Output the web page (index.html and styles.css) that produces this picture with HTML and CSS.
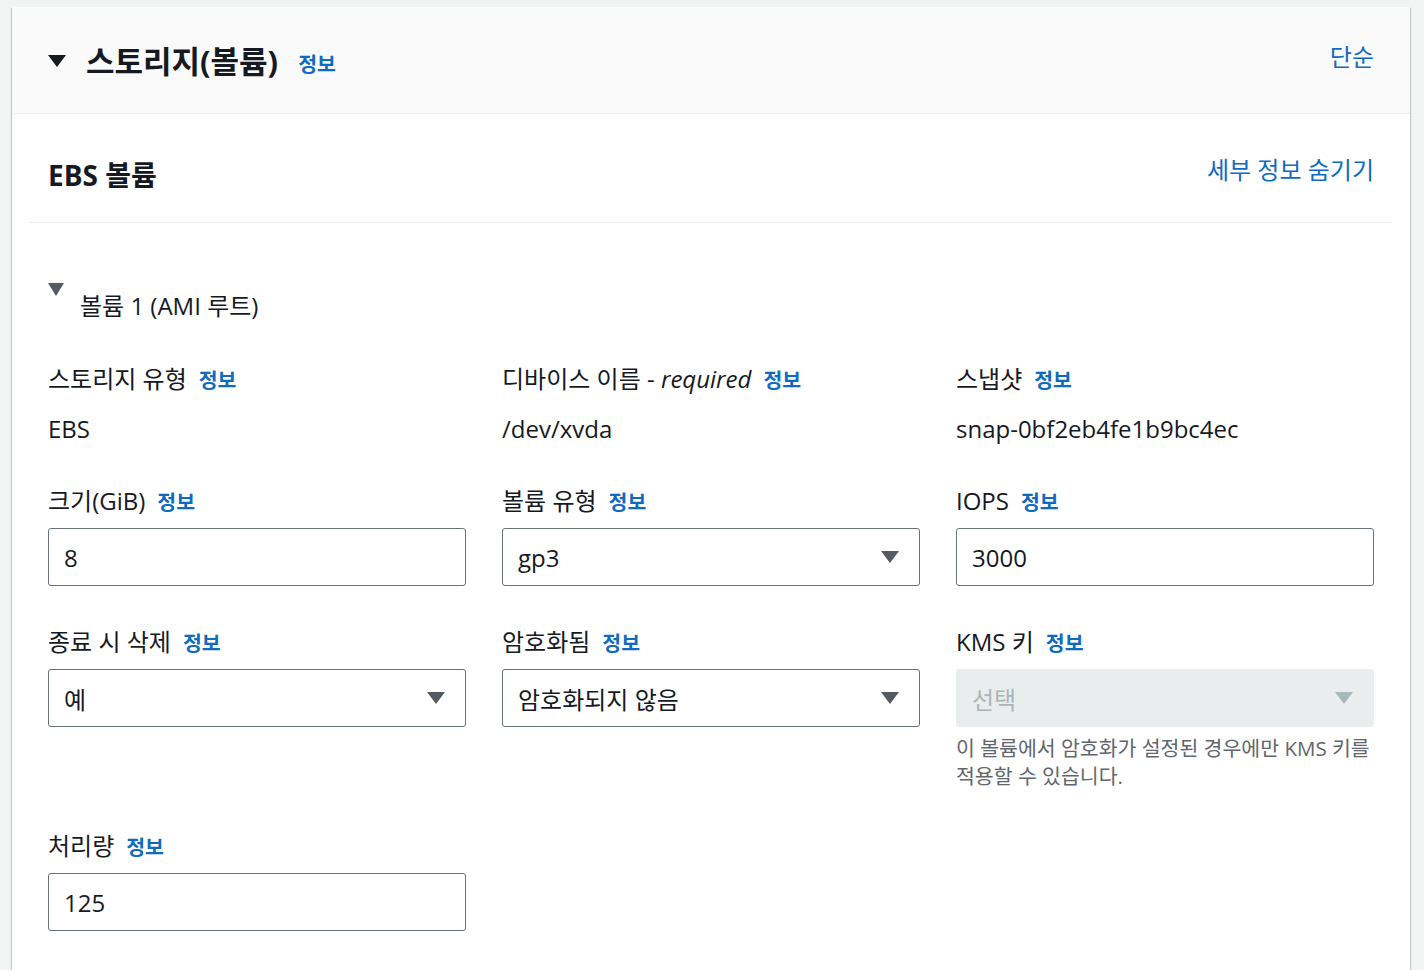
FILE: index.html
```html
<!DOCTYPE html>
<html lang="ko">

<head>
    <meta charset="UTF-8">
    <meta name="viewport" content="width=device-width, initial-scale=1.0">
    <title>스토리지(볼륨)</title>
    <link rel="stylesheet" href="styles.css">
</head>

<body>
    <div class="container">
        <div class="container-header">
            <h2 class="title">
                <span class="caret"></span>
                <span>스토리지(볼륨)</span>
                <a class="info title-info" href="#">정보</a>
            </h2>
            <a class="link" href="#">단순</a>
        </div>

        <div class="container-body">
            <div class="subheader">
                <h3>EBS 볼륨</h3>
                <a class="link" href="#">세부 정보 숨기기</a>
            </div>

            <div class="volume">
                <div class="volume-title">
                    <span class="caret caret-grey"></span>
                    <span>볼륨 1 (AMI 루트)</span>
                </div>

                <div class="fields">
                    <div class="field">
                        <label><span>스토리지 유형</span><a class="info" href="#">정보</a></label>
                        <div class="value">EBS</div>
                    </div>
                    <div class="field">
                        <label><span>디바이스 이름 - <i>required</i></span><a class="info" href="#">정보</a></label>
                        <div class="value">/dev/xvda</div>
                    </div>
                    <div class="field">
                        <label><span>스냅샷</span><a class="info" href="#">정보</a></label>
                        <div class="value">snap-0bf2eb4fe1b9bc4ec</div>
                    </div>

                    <div class="field">
                        <label><span>크기(GiB)</span><a class="info" href="#">정보</a></label>
                        <div class="input">8</div>
                    </div>
                    <div class="field">
                        <label><span>볼륨 유형</span><a class="info" href="#">정보</a></label>
                        <div class="input select">gp3<span class="arrow"></span></div>
                    </div>
                    <div class="field">
                        <label><span>IOPS</span><a class="info" href="#">정보</a></label>
                        <div class="input">3000</div>
                    </div>

                    <div class="field">
                        <label><span>종료 시 삭제</span><a class="info" href="#">정보</a></label>
                        <div class="input select">예<span class="arrow"></span></div>
                    </div>
                    <div class="field">
                        <label><span>암호화됨</span><a class="info" href="#">정보</a></label>
                        <div class="input select">암호화되지 않음<span class="arrow"></span></div>
                    </div>
                    <div class="field">
                        <label><span>KMS 키</span><a class="info" href="#">정보</a></label>
                        <div class="input select disabled">선택<span class="arrow"></span></div>
                        <p class="hint">이 볼륨에서 암호화가 설정된 경우에만 KMS 키를 적용할 수 있습니다.</p>
                    </div>

                    <div class="field">
                        <label><span>처리량</span><a class="info" href="#">정보</a></label>
                        <div class="input">125</div>
                    </div>
                </div>
            </div>
        </div>
    </div>
</body>

</html>
```

FILE: styles.css
```css
* {
    box-sizing: border-box;
}

body {
    margin: 0;
    padding-top: 7px;
    background: #f2f3f3;
    color: #16191f;
    font-family: "Open Sans", "Noto Sans CJK KR", sans-serif;
    font-size: 24px;
}

a {
    text-decoration: none;
}

.container {
    margin-left: 12px;
    width: 1398px;
    min-height: 970px;
    background: #fff;
    box-shadow: 0 1px 1px 0 rgba(0, 28, 36, 0.3), 1px 1px 1px 0 rgba(0, 28, 36, 0.15), -1px 1px 1px 0 rgba(0, 28, 36, 0.15);
}

.container-header {
    height: 107px;
    padding: 34px 36px 0 36px;
    background: #fafafa;
    border-bottom: 1px solid #eaeded;
    display: flex;
    justify-content: space-between;
    align-items: flex-start;
}

.title {
    margin: 0;
    font-size: 31px;
    line-height: 40px;
    font-weight: 700;
    display: flex;
    align-items: center;
}

.caret {
    width: 0;
    height: 0;
    border-left: 9px solid transparent;
    border-right: 9px solid transparent;
    border-top: 12px solid #16191f;
    margin-right: 20px;
}

.caret-grey {
    border-left-width: 8.5px;
    border-right-width: 8.5px;
    border-top: 13px solid #545b64;
    margin-right: 16px;
}

.link {
    color: #0f6bbf;
    font-size: 24px;
    line-height: 32px;
}

.info {
    color: #0f6bbf;
    font-size: 20.5px;
    line-height: 32px;
    font-weight: 700;
    margin-left: 12px;
}

.title-info {
    margin-left: 20px;
    margin-top: 6px;
}

.container-body {
    padding: 0 18px;
}

.subheader {
    height: 109px;
    padding: 40px 18px 0 18px;
    border-bottom: 1px solid #eaeded;
    display: flex;
    justify-content: space-between;
    align-items: flex-start;
}

.subheader h3 {
    margin: 0;
    font-size: 28px;
    line-height: 42px;
    font-weight: 700;
}

.volume {
    padding: 0 18px 40px 18px;
}

.volume-title {
    padding-top: 67px;
    line-height: 32px;
    display: flex;
    align-items: flex-start;
}

.volume-title .caret {
    margin-top: -7px;
}

.fields {
    margin-top: 41px;
    display: grid;
    grid-template-columns: repeat(3, 418px);
    column-gap: 36px;
    row-gap: 40px;
}

.field {
    display: flex;
    flex-direction: column;
}

.field label {
    height: 32px;
    line-height: 32px;
    white-space: nowrap;
    display: flex;
    align-items: baseline;
}

.field label i {
    font-style: italic;
}

.value {
    margin-top: 18px;
    line-height: 32px;
}

.input {
    margin-top: 11px;
    height: 58px;
    padding: 0 20px 0 15px;
    border: 1px solid #687078;
    border-radius: 3px;
    display: flex;
    align-items: center;
    justify-content: space-between;
}

.arrow {
    width: 0;
    height: 0;
    border-left: 9px solid transparent;
    border-right: 9px solid transparent;
    border-top: 12px solid #545b64;
}

.input.disabled {
    background: #eaeded;
    border-color: #eaeded;
    color: #aab7b8;
}

.input.disabled .arrow {
    border-top-color: #aab7b8;
}

.hint {
    margin: 7px 0 0 0;
    font-size: 20.5px;
    line-height: 28px;
    color: #5f666e;
}
```
